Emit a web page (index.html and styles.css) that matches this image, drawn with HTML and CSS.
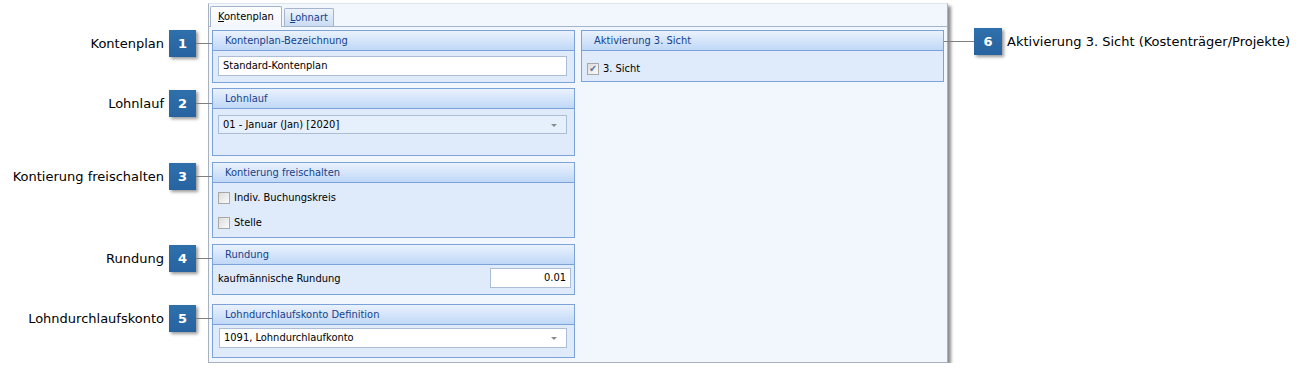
FILE: index.html
```html
<!DOCTYPE html>
<html lang="de">
<head>
  <meta charset="UTF-8" />
  <title>Kontenplan</title>
  <link rel="stylesheet" href="styles.css">
</head>
<body>
  <div class="page">
    <div class="callouts-left">
      <div class="callout c1"><span class="label">Kontenplan</span><span class="badge">1</span><span class="line"></span></div>
      <div class="callout c2"><span class="label">Lohnlauf</span><span class="badge">2</span><span class="line"></span></div>
      <div class="callout c3"><span class="label">Kontierung freischalten</span><span class="badge">3</span><span class="line"></span></div>
      <div class="callout c4"><span class="label">Rundung</span><span class="badge">4</span><span class="line"></span></div>
      <div class="callout c5"><span class="label">Lohndurchlaufskonto</span><span class="badge">5</span><span class="line"></span></div>
    </div>

    <div class="window">
      <div class="tabs">
        <div class="tab active"><u>K</u>ontenplan</div>
        <div class="tab"><u>L</u>ohnart</div>
      </div>
      <div class="tab-body">
        <div class="col">
          <div class="group g1">
            <div class="group-head">Kontenplan-Bezeichnung</div>
            <div class="group-body">
              <div class="field">Standard-Kontenplan</div>
            </div>
          </div>
          <div class="group g2">
            <div class="group-head">Lohnlauf</div>
            <div class="group-body">
              <div class="field combo">01 - Januar (Jan) [2020]<span class="arrow"></span></div>
            </div>
          </div>
          <div class="group g3">
            <div class="group-head">Kontierung freischalten</div>
            <div class="group-body">
              <div class="check"><span class="box"></span>Indiv. Buchungskreis</div>
              <div class="check"><span class="box"></span>Stelle</div>
            </div>
          </div>
          <div class="group g4">
            <div class="group-head">Rundung</div>
            <div class="group-body row">
              <span>kaufmännische Rundung</span>
              <div class="field num">0.01</div>
            </div>
          </div>
          <div class="group g5">
            <div class="group-head">Lohndurchlaufskonto Definition</div>
            <div class="group-body">
              <div class="field combo">1091, Lohndurchlaufkonto<span class="arrow"></span></div>
            </div>
          </div>
        </div>
        <div class="col">
          <div class="group g6">
            <div class="group-head">Aktivierung 3. Sicht</div>
            <div class="group-body">
              <div class="check"><span class="box checked">✔</span>3. Sicht</div>
            </div>
          </div>
        </div>
      </div>
    </div>

    <div class="callouts-right">
      <div class="callout c6"><span class="line"></span><span class="badge">6</span><span class="label">Aktivierung 3. Sicht (Kostenträger/Projekte)</span></div>
    </div>
  </div>
</body>
</html>
```
FILE: styles.css
```css
body {
  margin: 0;
  background: #fff;
  font-family: "DejaVu Sans", Verdana, sans-serif;
}
.page {
  display: flex;
  align-items: flex-start;
}
.callouts-left {
  width: 208px;
  flex-shrink: 0;
  display: flex;
  flex-direction: column;
  position: relative;
  z-index: 2;
}
.callout {
  display: flex;
  align-items: center;
  height: 27px;
  font-size: 13px;
  color: #000;
}
.callouts-left .callout {
  justify-content: flex-end;
  margin-right: -4px;
}
.callout .label {
  margin-right: 5px;
}
.badge {
  width: 27px;
  height: 27px;
  background: linear-gradient(#2f70ab, #2763a0);
  color: #fff;
  font-weight: bold;
  font-size: 13px;
  display: flex;
  align-items: center;
  justify-content: center;
  box-shadow: 2px 2px 3px rgba(0,0,0,0.4);
}
.callout .line {
  width: 16px;
  height: 1px;
  background: #7f7f7f;
}
.c1 { margin-top: 30px; }
.c2 { margin-top: 33px; }
.c3 { margin-top: 46px; }
.c4 { margin-top: 55px; }
.c5 { margin-top: 33px; }

.callouts-right {
  position: relative;
  z-index: 2;
  margin-left: -4px;
}
.c6 { margin-top: 28px; }
.c6 .line { width: 30px; }
.c6 .label { margin: 0 0 0 5px; }
.c6 .badge { width: 28px; }

.window {
  width: 738px;
  margin-top: 3px;
  height: 358px;
  background: #f2f6fd;
  border: 1px solid #a7b1c0;
  border-top-color: #dfe5ee;
  box-shadow: 3px 3px 3px rgba(0,0,0,0.45);
  font-family: "DejaVu Sans Condensed", Tahoma, sans-serif;
  font-size: 11px;
  color: #000;
}
.tabs {
  display: flex;
  align-items: flex-end;
  height: 22px;
  padding-left: 1px;
  gap: 2px;
  border-bottom: 1px solid #a3b4cc;
}
.tab {
  height: 17px;
  padding: 0 5px;
  border: 1px solid #a3b4cc;
  border-bottom: none;
  background: linear-gradient(#eef4fc, #c9dbf3);
  color: #15428b;
  line-height: 17px;
  border-radius: 2px 2px 0 0;
}
.tab.active {
  height: 20px;
  line-height: 20px;
  padding: 0 7px;
  margin-bottom: -1px;
  background: linear-gradient(#fdfeff, #f2f6fd);
  color: #000;
}
.tab-body {
  display: flex;
  gap: 6px;
  padding: 3px 3px 0;
}
.col {
  width: 363px;
  display: flex;
  flex-direction: column;
}
.group {
  border: 1px solid #7ba2d9;
  background: #dfebfb;
}
.group-head {
  height: 19px;
  line-height: 19px;
  padding-left: 12px;
  color: #15428b;
  background: linear-gradient(#eaf2fd, #c0d8f7);
  border-bottom: 1px solid #7ba2d9;
}
.group-body {
  padding: 5px 7px 6px 5px;
}
.field {
  height: 18px;
  line-height: 18px;
  padding: 0 4px;
  background: #fff;
  border: 1px solid #acbdd5;
  position: relative;
}
.combo .arrow {
  position: absolute;
  right: 9px;
  top: 8px;
  border: 3px solid transparent;
  border-top: 3px solid #8a8a8a;
  border-bottom: none;
}
.g2 { margin-top: 5px; }
.g3 { margin-top: 6px; }
.g4 { margin-top: 6px; }
.g5 { margin-top: 9px; }
.g2 .group-body { height: 34px; padding-top: 6px; }
.g2 .field { background: #e6effc; height: 17px; line-height: 17px; }
.g3 .group-body { padding: 2px 5px; }
.check {
  display: flex;
  align-items: center;
  height: 25px;
}
.box {
  width: 10px;
  height: 10px;
  border: 1px solid #a8a8a8;
  background: linear-gradient(135deg, #dcdcdc, #fbfbfb);
  margin-right: 4px;
  font-size: 10px;
  line-height: 10px;
  text-align: center;
  color: #5a6f9a;
}
.g6 .group-body { padding: 5px 5px 0; }
.group-body.row {
  display: flex;
  align-items: center;
  justify-content: space-between;
  padding: 3px 3px 6px 5px;
}
.num {
  width: 71px;
  text-align: right;
}
.g5 .group-body { padding: 3px 7px 9px 6px; }
```
